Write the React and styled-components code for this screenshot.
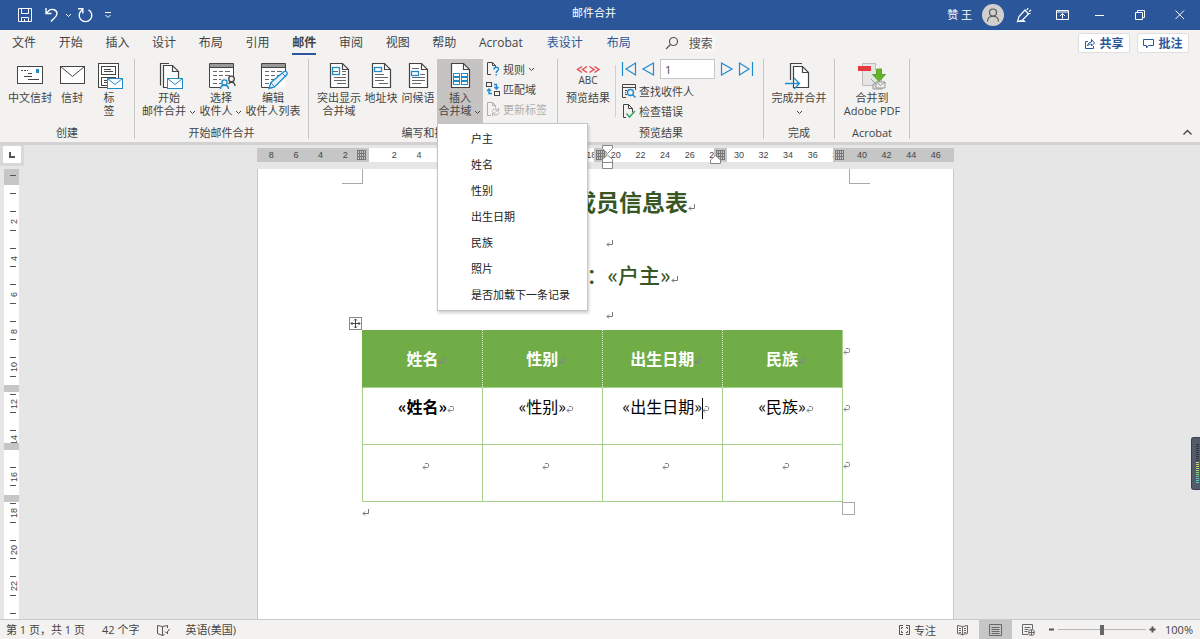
import React, { useState } from 'react'
import styled, { createGlobalStyle } from 'styled-components'

const MERGE_FIELDS = ['户主', '姓名', '性别', '出生日期', '民族', '照片', '是否加载下一条记录']
const MAIN_TABS = ['文件', '开始', '插入', '设计', '布局', '引用', '邮件', '审阅', '视图', '帮助']
const COLUMNS = ['姓名', '性别', '出生日期', '民族']

const RULER_LEFT = [8, 6, 4, 2, '']
const RULER_RIGHT = Array.from({ length: 23 }, (_, i) => (i + 1) * 2)
const RULER_SIDE = Array.from({ length: 11 }, (_, i) => (i + 1) * 2)
const METER = [
  ...Array(9).fill('#2f3540'),
  '#c9cf6a', '#c9cf6a', '#c0cf6a', '#b5cf6a', '#9bd071', '#8fd67a', '#7fd07f', '#62b8a0', '#5cc0b4', '#5cc9c4', '#5cc9c4'
]

const DARK = '#444'
const BLUE = '#1e8bcd'

const Icon = ({ w = 28, h = w, color = DARK, children }) => (
  <Svg width={w} height={h} viewBox={`0 0 ${w} ${h}`} fill="none" stroke={color} aria-hidden="true">
    {children}
  </Svg>
)

const Chevron = ({ color = DARK }) => (
  <Icon w={7} h={5} color={color}><path d="M1 1l2.5 2.5L6 1" /></Icon>
)

const MiniEnvelope = () => (
  <g stroke={BLUE}>
    <rect x="12.5" y="16.5" width="15" height="10" fill="#fff" />
    <path d="M12.5 16.5l7.5 6 7.5-6" />
  </g>
)

const PageShape = () => (
  <>
    <path d="M5.5 1.5h12l6 6v18h-18z" fill="#fff" strokeWidth="1.2" />
    <path d="M17.5 1.5v6h6" strokeWidth="1.2" />
  </>
)

const ListShape = () => (
  <>
    <path d="M2.5 1.5h24v24h-24z" fill="#fff" stroke="none" />
    <path d="M2.5 3.5h24" stroke="#999" strokeWidth="3" />
    <path d="M15 25.5H2.5v-24h24V14M2.5 5.5h24" />
    <path d="M6 9.5h4m2 0h4m2 0h5M6 13.5h4m2 0h4m2 0h5M6 17.5h4m2 0h4M6 21.5h4m2 0h2" stroke="#666" />
  </>
)

const ChineseEnvelopeIcon = () => (
  <Icon>
    <rect x="1.5" y="4.5" width="25" height="17" fill="#fff" />
    <path d="M5 8.5h2m1 0h2m1 0h1M12 11.5h4M8 14.5h8M12 17.5h11" />
    <rect x="20" y="7" width="3" height="4" fill={BLUE} stroke="none" />
  </Icon>
)

const EnvelopeIcon = () => (
  <Icon>
    <rect x="2.5" y="4.5" width="24" height="17" fill="#fff" />
    <path d="M2.5 4.5l12 10 12-10" />
  </Icon>
)

const LabelsIcon = () => (
  <Icon>
    <rect x="3.5" y="1.5" width="20" height="24" fill="#fff" />
    <rect x="6.5" y="4.5" width="14" height="8" />
    <rect x="6.5" y="15.5" width="14" height="8" />
    <path d="M9 7.5h7M9 9.5h9M9 18.5h4M9 20.5h3" />
    <MiniEnvelope />
  </Icon>
)

const StartMergeIcon = () => (
  <Icon>
    <path d="M5.5 23.5v-22H14" strokeWidth="1.2" />
    <path d="M8.5 3.5h9l6 6v16h-15z" fill="#fff" strokeWidth="1.2" />
    <path d="M17.5 3.5v6h6" strokeWidth="1.2" />
    <MiniEnvelope />
  </Icon>
)

const RecipientsIcon = () => (
  <Icon>
    <ListShape />
    <path d="M14 15h14v12H14z" fill="#f3f2f1" stroke="none" />
    <circle cx="24.5" cy="17" r="2.8" strokeWidth="1.3" />
    <path d="M21.5 22c2-3 6.500-2 6.500 2" strokeWidth="1.3" />
    <g stroke={BLUE} strokeWidth="1.4">
      <circle cx="17.5" cy="20.500" r="2.6" />
      <path d="M13.5 27c0-5 8-5 8 0" />
    </g>
  </Icon>
)

const EditListIcon = () => (
  <Icon>
    <ListShape />
    <path d="M10 26.5l2-6L25 9.5c2-1 4 1 3 3L15.5 25z" fill="#e4f1fa" stroke={BLUE} strokeWidth="1.3" />
    <path d="M12 21l3.5 3.5M23 11l3.5 3.5" stroke={BLUE} />
  </Icon>
)

const HighlightIcon = () => (
  <Icon>
    <PageShape />
    <rect x="7.5" y="5.5" width="7" height="7" stroke={BLUE} strokeWidth="1.3" />
    <path d="M8 9.5h5M17 9.5h4M17 12.5h4M9 15.5h12M9 18.5h12M12 21.5h9" stroke="#666" />
  </Icon>
)

const AddressIcon = () => (
  <Icon>
    <PageShape />
    <rect x="7.5" y="5.5" width="7" height="4" stroke={BLUE} strokeWidth="1.3" />
    <path d="M8 12.5h9M8 15.5h13M8 18.5h9M12 21.5h9" stroke="#666" />
  </Icon>
)

const GreetingIcon = () => (
  <Icon>
    <PageShape />
    <path d="M8 6.5h7M16 12.5h5M8 15.5h13M8 18.5h13M8 21.5h9" stroke="#666" />
    <rect x="7.5" y="9.5" width="7" height="4" stroke={BLUE} strokeWidth="1.3" />
  </Icon>
)

const InsertFieldIcon = () => (
  <Icon>
    <PageShape />
    <g stroke={BLUE}>
      <rect x="7.5" y="11.5" width="6" height="3" /><rect x="15.5" y="11.5" width="6" height="3" />
      <rect x="7.5" y="15.5" width="6" height="3" /><rect x="15.5" y="15.5" width="6" height="3" />
      <rect x="7.5" y="19.5" width="6" height="3" /><rect x="15.5" y="19.5" width="6" height="3" />
    </g>
  </Icon>
)

const FinishIcon = () => (
  <Icon>
    <path d="M5.5 18V1.5H17" strokeWidth="1.2" />
    <path d="M8.5 25.5v-21h9l6 6v15z" fill="#fff" strokeWidth="1.2" />
    <path d="M17.5 4.5v6h6" strokeWidth="1.2" />
    <path d="M0 21.5h14M9 16l5.5 5.5L9 27" stroke={BLUE} strokeWidth="1.3" />
  </Icon>
)

const PdfIcon = () => (
  <Icon>
    <path d="M4.5 1.5h13l6 6v16h-19z" fill="#e6e6e6" stroke="#bbb" />
    <path d="M17.5 1.5v6h6" fill="#fff" stroke="#bbb" />
    <path d="M0 4h13v5H0z" fill="#e5383f" stroke="none" />
    <path d="M13 17l7 7M15 22h9v5h-9z" fill="#ddd" stroke="#999" />
    <path d="M18 20h9v6h-9z" fill="#eee" stroke="#999" />
    <path d="M18 20l4.5 3.5L27 20" stroke="#999" />
    <path d="M18.5 7h5v5.5h4L21 19.5l-6.500-7h4z" fill="#66b32e" stroke="#5aa626" />
  </Icon>
)

const PreviewIcon = () => (
  <PreviewGlyph>
    <Icon w={24} h={9} color="#e5484d"><path d="M6 1.500L1.500 4.500 6 7.500M11 1.500L6.500 4.500 11 7.500M13.500 1.500l4.500 3-4.500 3M18.500 1.500l4.500 3-4.500 3" strokeWidth="1.4" /></Icon>
    <span>ABC</span>
  </PreviewGlyph>
)

const RulesIcon = () => (
  <Icon w={14}>
    <path d="M5 12.5H1.5V.5h5l3 3v2M6.5.5v3h3" />
    <path d="M8 7.5c0-3 4.5-3 4.500-.5 0 2-2.300 1.800-2.300 4M10.200 12v1.500" stroke={BLUE} strokeWidth="1.4" />
  </Icon>
)

const MatchIcon = () => (
  <Icon w={14}>
    <rect x=".5" y=".5" width="5" height="4" /><rect x="8.5" y="9.5" width="5" height="4" />
    <path d="M8 2.5h2.500V7M8.500 5l2 2 2-2M6 11.500H3V7M1 9l2-2 2 2" stroke={BLUE} strokeWidth="1.4" />
  </Icon>
)

const UpdateIcon = () => (
  <Icon w={14} color="#b0aeac">
    <path d="M5 13.5H1.5V.5h5l3 3v2M6.5.5v3h3" />
    <path d="M6 9.500c.5-3 5-3.500 6-1M12.500 6v3h-3M13 10.500c-.5 3-5 3.500-6 1M6.500 14v-3h3" />
  </Icon>
)

const FindIcon = () => (
  <Icon w={14}>
    <path d="M4 13.5H.5V.5h13V6M.5 3.5h13" />
    <path d="M3 6.5h2M3 8.5h1M3 10.5h2" />
    <circle cx="8.5" cy="8.5" r="3" stroke={BLUE} strokeWidth="1.4" />
    <path d="M10.5 10.5l3 3" stroke={BLUE} strokeWidth="1.4" />
  </Icon>
)

const CheckErrorsIcon = () => (
  <Icon w={14}>
    <path d="M4 13.5H1.5V.5h5l4 4v4M6.5.5v4h4" />
    <path d="M4.5 9.5l3 3.5L13 7" stroke="#3aa862" strokeWidth="1.5" />
  </Icon>
)

const LineMark = () => (
  <Mark><Icon w={7} h={8} color="#777"><path d="M6.5 1v4.5H1M3 3.5l-2 2 2 2" /></Icon></Mark>
)

const CellMark = () => (
  <Mark><Icon w={7} h={8} color="#81848c"><path d="M3 1.5h2.5q1 0 1 1v2q0 1-1 1H1M3 3.500l-2 2 2 2" /></Icon></Mark>
)

const GridMark = () => (
  <Icon w={9} h={10} color="#777"><path d="M.5 0v10M2.5 0v10M4.5 0v10M6.5 0v10M8.5 0v10M0 .5h9M0 3.5h9M0 6.5h9M0 9.5h9" /></Icon>
)

function TitleBar() {
  return (
    <TitleRow>
      <QuickAccess>
        <TitleButton $w={30} aria-label="保存">
          <Icon w={16} color="#fff"><path d="M1.5 1.5h13v13h-13zM4.5 1.5v5h7v-5M4.5 14.5v-4h7v4M7.5 14v-2" /></Icon>
        </TitleButton>
        <TitleButton $w={24} aria-label="撤消">
          <Icon w={16} color="#fff"><path d="M2 1v5.5h5.5M2 6.5l3-3c3-2.500 8-.5 8 3 0 4-4 5-6 8" strokeWidth="1.4" /></Icon>
        </TitleButton>
        <TitleButton $w={8} aria-label="撤消列表"><Chevron color="#fff" /></TitleButton>
        <TitleButton $w={26} aria-label="重复">
          <Icon w={16} color="#fff"><path d="M5.500 2.800a6.300 6.300 0 1 0 6 0M1 1.700h4.800v4.800" strokeWidth="1.4" /></Icon>
        </TitleButton>
        <TitleButton $w={20} aria-label="自定义快速访问工具栏">
          <Icon w={8} color="#fff"><path d="M1 1.5h6M1.500 4L4 6.500 6.500 4" /></Icon>
        </TitleButton>
      </QuickAccess>
      <DocName>邮件合并</DocName>
      <WindowTools>
        <span>赞 王</span>
        <Avatar aria-label="帐户">
          <Icon w={16} color="#555"><circle cx="8" cy="5.5" r="3.500" strokeWidth="1.2" /><path d="M2.500 14.500c0-7 11-7 11 0" strokeWidth="1.2" /></Icon>
        </Avatar>
        <TitleButton $w={40} aria-label="墨迹">
          <Icon w={16} color="#fff"><path d="M1.500 14.500l1.500-5 6-6.500 3.500 4-6 6zM1.500 14.500h7l-2-2M11 3l1-2M13 4.500l2-1.500M12.500 6.500h2" strokeWidth="1.2" /></Icon>
        </TitleButton>
        <TitleButton $w={36} aria-label="功能区显示选项">
          <Icon w={14} h={12} color="#fff"><path d="M1.5 1.5h12v9h-12zM1.5 3h12M7.5 9.5V5M5 7l2.500-2.500L10 7" /></Icon>
        </TitleButton>
        <TitleButton $w={40} aria-label="最小化"><Icon w={10} color="#fff"><path d="M0 5.5h9" /></Icon></TitleButton>
        <TitleButton $w={40} aria-label="还原"><Icon w={10} color="#fff"><path d="M.5 2.5h7v7h-7zM2.5 2V.5h7v7H8" /></Icon></TitleButton>
        <TitleButton $w={40} aria-label="关闭"><Icon w={10} color="#fff"><path d="M.5.5l8.500 8.500M9 .5L.5 9" /></Icon></TitleButton>
      </WindowTools>
    </TitleRow>
  )
}

function TabBar() {
  const [active, setActive] = useState('邮件')
  return (
    <TabRow>
      <MainTabs>
        {MAIN_TABS.map((tab) => (
          <Tab key={tab} $active={tab === active} onClick={() => setActive(tab)}><span>{tab}</span></Tab>
        ))}
      </MainTabs>
      <MoreTabs>
        <Tab><span>Acrobat</span></Tab>
        <Tab $context><span>表设计</span></Tab>
        <Tab $context><span>布局</span></Tab>
      </MoreTabs>
      <SearchBox>
        <Icon w={14} color="#555"><circle cx="8.5" cy="5.5" r="4" strokeWidth="1.2" /><path d="M5.5 8.5L1 13" strokeWidth="1.2" /></Icon>
        <input type="text" aria-label="搜索" placeholder="搜索" />
      </SearchBox>
      <ShareButton>
        <Icon w={11} color="#2b579a"><path d="M4 3.5H1.5v7h8V8M3.500 8c.5-3 2-4 4-4V1.500L10.500 5l-3 3V6c-2 0-3 .5-4 2z" /></Icon>
        共享
      </ShareButton>
      <ShareButton>
        <Icon w={11} color="#2b579a"><path d="M.5 1.5h10v6h-5L3.500 10V7.500h-3z" /></Icon>
        批注
      </ShareButton>
    </TabRow>
  )
}

function Ribbon() {
  const [open, setOpen] = useState(true)
  return (
    <RibbonRow>
      <Group $w={135} $pad={4}>
        <Tools>
          <BigButton $w={52}><ChineseEnvelopeIcon />中文信封</BigButton>
          <BigButton $w={32}><EnvelopeIcon />信封</BigButton>
          <BigButton $w={42}><LabelsIcon />标<br />签</BigButton>
        </Tools>
        <GroupName>创建</GroupName>
      </Group>
      <Group $w={174} $pad={4}>
        <Tools>
          <BigButton $w={60}><StartMergeIcon />开始<span>邮件合并 <Chevron /></span></BigButton>
          <BigButton $w={44}><RecipientsIcon />选择<span>收件人 <Chevron /></span></BigButton>
          <BigButton $w={60}><EditListIcon />编辑<span>收件人列表</span></BigButton>
        </Tools>
        <GroupName>开始邮件合并</GroupName>
      </Group>
      <Group $w={249} $pad={7}>
        <Tools>
          <BigButton $w={46}><HighlightIcon />突出显示<span>合并域</span></BigButton>
          <BigButton $w={38}><AddressIcon />地址块</BigButton>
          <BigButton $w={36}><GreetingIcon />问候语</BigButton>
          <MenuAnchor>
            <BigButton $w={46} $pressed={open} aria-haspopup="menu" aria-expanded={open} onClick={() => setOpen(!open)}>
              <InsertFieldIcon />插入<span>合并域 <Chevron /></span>
            </BigButton>
            {open && (
              <Menu role="menu">
                {MERGE_FIELDS.map((field) => (
                  <MenuItem key={field} role="menuitem" onClick={() => setOpen(false)}>{field}</MenuItem>
                ))}
              </Menu>
            )}
          </MenuAnchor>
          <SmallTools $pad={3}>
            <SmallButton><RulesIcon />规则 <Chevron /></SmallButton>
            <SmallButton><MatchIcon />匹配域</SmallButton>
            <SmallButton disabled><UpdateIcon />更新标签</SmallButton>
          </SmallTools>
        </Tools>
        <GroupName>编写和插入域</GroupName>
      </Group>
      <Group $w={206} $pad={5}>
        <Tools>
          <BigButton $w={50}><PreviewIcon />预览结果</BigButton>
          <InnerLine />
          <SmallTools $pad={6}>
            <RecordNav>
              <button aria-label="首记录"><Icon w={14} color={BLUE}><path d="M.5 0v14M13.500 1v12L4 7z" strokeWidth="1.2" /></Icon></button>
              <button aria-label="上一记录"><Icon w={14} color={BLUE}><path d="M12.500 1v12L2 7z" strokeWidth="1.2" /></Icon></button>
              <input type="text" aria-label="记录" defaultValue="1" />
              <button aria-label="下一记录"><Icon w={14} color={BLUE}><path d="M1.500 1v12L12 7z" strokeWidth="1.2" /></Icon></button>
              <button aria-label="尾记录"><Icon w={14} color={BLUE}><path d="M13.500 0v14M.5 1v12L10 7z" strokeWidth="1.2" /></Icon></button>
            </RecordNav>
            <SmallButton><FindIcon />查找收件人</SmallButton>
            <SmallButton><CheckErrorsIcon />检查错误</SmallButton>
          </SmallTools>
        </Tools>
        <GroupName>预览结果</GroupName>
      </Group>
      <Group $w={71} $pad={4}>
        <Tools>
          <BigButton $w={62}><FinishIcon />完成并合并<span><Chevron /></span></BigButton>
        </Tools>
        <GroupName>完成</GroupName>
      </Group>
      <Group $w={75} $pad={4}>
        <Tools>
          <BigButton $w={66}><PdfIcon />合并到<span>Adobe PDF</span></BigButton>
        </Tools>
        <GroupName>Acrobat</GroupName>
      </Group>
      <Collapse aria-label="折叠功能区"><Icon w={11} h={7}><path d="M1.5 5.5l4-4 4 4" strokeWidth="1.4" /></Icon></Collapse>
    </RibbonRow>
  )
}

function SideRuler() {
  return (
    <SideColumn>
      <TabStop aria-label="制表符"><Icon w={6} color="#555"><path d="M1 0v5h5" strokeWidth="2" /></Icon></TabStop>
      <SideScale>
        <SideMargin><SideTick /></SideMargin>
        <SideGap><SideTick /></SideGap>
        {RULER_SIDE.map((n) => (
          <SideCell key={n}><SideTick /><span>{n}</span><SideTick /></SideCell>
        ))}
        <SideCell><SideTick /></SideCell>
        <RowBand $top={216} />
        <RowBand $top={274} />
        <RowBand $top={326} />
      </SideScale>
    </SideColumn>
  )
}

function TopRuler() {
  return (
    <TopScale>
      {[...RULER_LEFT, ...RULER_RIGHT].map((n, i) => <span key={i}>{n}</span>)}
      <ColumnMark $left={98}><GridMark /></ColumnMark>
      <ColumnMark $left={337}><GridMark /></ColumnMark>
      <ColumnMark $left={457}><GridMark /></ColumnMark>
      <ColumnMark $left={576}><GridMark /></ColumnMark>
      <Indent $left={345} $top={-3}>
        <Icon w={11} h={25} color="#888">
          <path d="M.5.5h10v3l-5 5-5-5zM5.5 10l5 4.500v3H.5v-3zM.5 17.5h10v6H.5z" fill="#fff" />
        </Icon>
      </Indent>
      <Indent $left={453} $top={7}>
        <Icon w={11} h={9} color="#888"><path d="M5.5.5l5 4.500v3.500H.5V5z" fill="#fff" /></Icon>
      </Indent>
    </TopScale>
  )
}

function DocumentPage() {
  return (
    <Sheet>
      <Corners><Corner $side="right" /><Corner $side="left" /></Corners>
      <Heading>家庭成员信息表<LineMark /></Heading>
      <Blank><LineMark /></Blank>
      <SubHeading>户主：«户主»<LineMark /></SubHeading>
      <Blank><LineMark /></Blank>
      <TableBox>
        <MoveHandle>
          <Icon w={13}><rect x=".5" y=".5" width="12" height="12" fill="#fff" stroke="#888" /><path d="M6.5 2v9M2 6.5h9M5 3.5L6.5 2 8 3.5M5 9.5L6.5 11 8 9.5M3.5 5L2 6.5 3.5 8M9.5 5L11 6.5 9.5 8" /></Icon>
        </MoveHandle>
        <DataTable>
          <thead>
            <tr>
              {COLUMNS.map((name) => <th key={name} scope="col">{name}<CellMark /></th>)}
              <RowEnd><CellMark /></RowEnd>
            </tr>
          </thead>
          <tbody>
            <tr>
              {COLUMNS.map((name) => (
                <td key={name}>«{name}»{name === '出生日期' && <Caret />}<CellMark /></td>
              ))}
              <RowEnd><CellMark /></RowEnd>
            </tr>
            <tr>
              {COLUMNS.map((name) => <td key={name}><CellMark /></td>)}
              <RowEnd><CellMark /></RowEnd>
            </tr>
          </tbody>
        </DataTable>
        <SizeHandle />
      </TableBox>
      <LastLine><LineMark /></LastLine>
    </Sheet>
  )
}

function StatusBar() {
  const [zoom, setZoom] = useState(100)
  return (
    <StatusRow>
      <StatusText>第 1 页，共 1 页</StatusText>
      <StatusText>42 个字</StatusText>
      <Icon w={14} h={12} color="#555"><path d="M6.500 2.500v9M6.500 2.500l-5-1v8l5 2 2-1M6.500 2.500l5-1V4M9 7.500l1.500 1.500 3-4M11.500 8v2" /></Icon>
      <StatusText>英语(美国)</StatusText>
      <Filler />
      <FocusButton>
        <Icon w={13} h={12} color="#555"><path d="M5 1.5H1.500v9H5M8 1.500h3.500v9H8M3.500 5V3.500H5M9.500 5V3.500H8M3.500 7v1.500H5M9.500 7v1.500H8" /></Icon>
        专注
      </FocusButton>
      <ViewButton aria-label="阅读视图">
        <Icon w={13} h={12} color="#666"><path d="M6.500 2.500v9M6.500 2.500l-5-1v8l5 1 5-1v-8zM3 4.500h2M3 6.500h2M3 8.500h2M8 4.500h2M8 6.500h2M8 8.500h2" /></Icon>
      </ViewButton>
      <ViewButton $active aria-label="页面视图">
        <Icon w={13} h={12} color="#666"><path d="M.5.5h12v11H.5zM2.500 3.500h8M2.500 5.500h8M2.500 7.500h8M2.500 9.500h8" /></Icon>
      </ViewButton>
      <ViewButton aria-label="Web 版式视图">
        <Icon w={13} h={12} color="#666"><path d="M6 10.500H.5V.5h10V5M2.500 3.500h6M2.500 5.500h4M2.500 7.500h3" /><circle cx="9.500" cy="8.500" r="3" /><path d="M7 8.500h5M9.500 6v5" /></Icon>
      </ViewButton>
      <ZoomButton aria-label="缩小" onClick={() => setZoom(Math.max(10, zoom - 10))}>
        <Icon w={7} color="#555"><path d="M1 3.500h5" strokeWidth="2" /></Icon>
      </ZoomButton>
      <ZoomSlider type="range" aria-label="显示比例" min="10" max="190" value={zoom} onChange={(e) => setZoom(Number(e.target.value))} />
      <ZoomButton aria-label="放大" onClick={() => setZoom(Math.min(190, zoom + 10))}>
        <Icon w={7} color="#555"><path d="M.5 3.500h6M3.500.5v6" strokeWidth="2" /></Icon>
      </ZoomButton>
      <ZoomText>{zoom}%</ZoomText>
    </StatusRow>
  )
}

function App() {
  return (
    <>
      <GlobalStyle />
      <Shell>
        <TitleBar />
        <TabBar />
        <Ribbon />
        <Workspace>
          <SideRuler />
          <Canvas>
            <TopRuler />
            <DocumentPage />
          </Canvas>
          <Meter>{METER.map((color, k) => <MeterBar key={k} $color={color} />)}</Meter>
        </Workspace>
        <StatusBar />
      </Shell>
    </>
  )
}

export default App


const GlobalStyle = createGlobalStyle`
  * { box-sizing: border-box; }
  body { margin: 0; }
  body, button, input {
    font-family: "Open Sans", "Noto Sans CJK SC", sans-serif;
    font-size: 11px;
    color: #444;
  }
  button { background: none; border: 0; padding: 0; }
`

const Shell = styled.div`
  height: 100vh;
  display: flex;
  flex-direction: column;
  overflow: hidden;
  background: #f3f2f1;`

const Svg = styled.svg`
  flex: none;
  overflow: visible;`

const TitleRow = styled.header`
  flex: none;
  height: 30px;
  display: grid;
  grid-template-columns: 1fr auto 1fr;
  align-items: center;
  background: #2b579a;
  color: #fff;
  font-size: 11px;`

const QuickAccess = styled.div`
  display: flex;
  align-items: center;
  padding-left: 10px;`

const DocName = styled.div`
  margin-right: 12px;
  line-height: 26px;
  align-self: start;`

const WindowTools = styled.div`
  display: flex;
  align-items: center;
  justify-content: flex-end;
  line-height: 28px;`

const TitleButton = styled.button`
  width: ${(props) => props.$w}px;
  height: 30px;
  display: flex;
  align-items: center;
  justify-content: center;`

const Avatar = styled.button`
  width: 22px;
  height: 22px;
  margin-left: 10px;
  border-radius: 50%;
  background: #d2d0ce;
  display: flex;
  align-items: center;
  justify-content: center;`

const TabRow = styled.nav`
  flex: none;
  height: 26px;
  display: flex;
  align-items: center;
  padding: 0 11px 0 12px;`

const MainTabs = styled.div`
  width: 467px;
  display: flex;`

const MoreTabs = styled.div`
  display: flex;
  gap: 24px;`

const Tab = styled.button`
  flex: 1 0 auto;
  text-align: left;
  font-size: 12px;
  color: ${(props) => (props.$context ? '#2b579a' : '#444')};
  font-weight: ${(props) => (props.$active ? 700 : 400)};
  white-space: nowrap;
  span {
    display: inline-block;
    padding-top: 2px;
    line-height: 20px;
    border-bottom: 2px solid ${(props) => (props.$active ? '#2b579a' : 'transparent')};
  }`

const SearchBox = styled.label`
  flex: 1;
  display: flex;
  align-items: center;
  gap: 10px;
  padding-left: 34px;
  input {
    width: 26px;
    height: 16px;
    padding: 0;
    border: 0;
    background: #f9f8f7;
    font-size: 12px;
  }
  input::placeholder { color: #555; }`

const ShareButton = styled.button`
  width: 52px;
  height: 20px;
  margin-left: 7px;
  display: flex;
  align-items: center;
  justify-content: center;
  gap: 4px;
  background: #fff;
  border: 1px solid #e1dfdd;
  border-radius: 2px;
  color: #2b579a;
  font-size: 12px;
  font-weight: 700;`

const RibbonRow = styled.section`
  flex: none;
  height: 86px;
  padding: 3px 0;
  display: flex;`

const Group = styled.div`
  flex: none;
  width: ${(props) => props.$w}px;
  padding-left: ${(props) => props.$pad}px;
  padding-right: 4px;
  border-right: 1px solid #c8c6c4;
  display: flex;
  flex-direction: column;`

const Tools = styled.div`
  height: 64px;
  display: flex;`

const GroupName = styled.div`
  line-height: 20px;
  text-align: center;`

const BigButton = styled.button`
  flex: none;
  width: ${(props) => props.$w}px;
  height: 64px;
  padding-top: 3px;
  display: flex;
  flex-direction: column;
  align-items: center;
  background: ${(props) => (props.$pressed ? '#c6c4c2' : 'transparent')};
  line-height: 13px;
  white-space: nowrap;
  > svg { margin-bottom: 1px; }
  span svg { vertical-align: middle; }`

const PreviewGlyph = styled.div`
  height: 29px;
  padding-top: 3px;
  display: flex;
  flex-direction: column;
  align-items: center;
  font-size: 10px;
  line-height: 12px;`

const SmallTools = styled.div`
  padding-left: ${(props) => props.$pad}px;
  display: flex;
  flex-direction: column;`

const SmallButton = styled.button`
  height: 20px;
  display: flex;
  align-items: center;
  gap: 3px;
  white-space: nowrap;
  color: ${(props) => (props.disabled ? '#b0aeac' : '#444')};`

const InnerLine = styled.div`
  width: 1px;
  height: 52px;
  margin: 6px 0 0 2px;
  background: #d2d0ce;`

const RecordNav = styled.div`
  display: flex;
  align-items: center;
  height: 22px;
  padding-bottom: 2px;
  gap: 5px;
  button { display: flex; }
  input {
    width: 55px;
    height: 20px;
    padding: 0 4px;
    border: 1px solid #c8c6c4;
    background: #fff;
  }`

const Collapse = styled.button`
  margin-left: auto;
  align-self: flex-end;
  padding-right: 7px;`

const MenuAnchor = styled.div`
  position: relative;
  margin-left: 1px;`

const Menu = styled.div`
  position: absolute;
  z-index: 5;
  top: 64px;
  left: 0;
  width: 151px;
  padding: 1px 0 3px;
  display: flex;
  flex-direction: column;
  background: #fff;
  border: 1px solid #c6c6c6;
  box-shadow: 1px 2px 3px #0003;`

const MenuItem = styled.button`
  height: 26px;
  padding-left: 33px;
  text-align: left;
  color: #222;
  white-space: nowrap;`

const Workspace = styled.main`
  position: relative;
  flex: 1;
  min-height: 0;
  display: flex;
  background: #e6e6e6;
  border-top: 3px solid #d2d2d2;
  overflow: hidden;`

const SideColumn = styled.div`
  flex: none;
  width: 24px;
  display: flex;
  flex-direction: column;`

const TabStop = styled.button`
  flex: none;
  width: 24px;
  height: 21px;
  border: 3px solid #d8d8d8;
  border-top-width: 1px;
  background: #fff;
  display: flex;
  align-items: center;
  justify-content: center;`

const SideScale = styled.div`
  position: relative;
  flex: 1;
  min-height: 0;
  width: 15px;
  margin: 3px 0 0 4px;
  overflow: hidden;
  background: #fff;`

const SideMargin = styled.div`
  height: 16px;
  padding: 6px 0 0 6px;
  background: #c6c6c6;`

const SideGap = styled.div`
  height: 17px;
  padding: 8px 0 0 6px;`

const SideTick = styled.i`
  display: block;
  width: 6px;
  height: 1px;
  background: #555;`

const SideCell = styled.div`
  height: 36px;
  padding: 9px 0 8px 6px;
  display: flex;
  flex-direction: column;
  justify-content: space-between;
  &:nth-child(odd) { height: 37px; }
  span {
    height: 12px;
    width: 8px;
    display: flex;
    align-items: center;
    justify-content: center;
    writing-mode: vertical-rl;
    transform: rotate(180deg);
    font-family: "Liberation Sans", sans-serif;
    font-size: 9px;
    line-height: 8px;
  }`

const RowBand = styled.div`
  position: absolute;
  left: 0;
  top: ${(props) => props.$top}px;
  width: 15px;
  height: 7px;
  background: #c6c6c6;`

const Canvas = styled.div`
  flex: 1;
  min-width: 0;
  padding: 3px 13px 0 0;
  display: flex;
  flex-direction: column;
  align-items: center;`

const TopScale = styled.div`
  position: relative;
  flex: none;
  width: 697px;
  height: 14px;
  padding: 0 6px 0 2px;
  display: flex;
  background: linear-gradient(to right, #c6c6c6 112px, #fff 112px, #fff 580px, #c6c6c6 580px);
  span {
    flex: 1;
    text-align: center;
    font-family: "Liberation Sans", sans-serif;
    font-size: 9px;
    line-height: 14px;
  }`

const ColumnMark = styled.div`
  position: absolute;
  left: ${(props) => props.$left}px;
  top: 0;
  height: 14px;
  padding: 2px;
  background: #c6c6c6;
  display: flex;`

const Indent = styled.div`
  position: absolute;
  left: ${(props) => props.$left}px;
  top: ${(props) => props.$top}px;
  display: flex;`

const Sheet = styled.article`
  flex: 1;
  width: 697px;
  margin-top: 7px;
  border: solid #c8c8c8;
  border-width: 0 1px;
  background: #fff;
  color: #000;
  font-family: "Noto Sans CJK SC", sans-serif;`

const Corners = styled.div`
  display: flex;
  justify-content: space-between;
  padding: 0 83px 0 84px;`

const Corner = styled.div`
  width: 21px;
  height: 15px;
  border-bottom: 1px solid #aaa;
  border-${(props) => props.$side}: 1px solid #aaa;`

const Heading = styled.h1`
  margin: 0;
  padding-left: 4px;
  font-size: 23px;
  line-height: 34px;
  text-align: center;
  color: #385623;`

const SubHeading = styled.h2`
  margin: 0;
  padding-left: 4px;
  font-size: 21px;
  font-weight: 500;
  line-height: 32px;
  text-align: center;
  color: #385623;`

const Blank = styled.p`
  margin: 0;
  height: 40px;
  font-size: 16px;
  line-height: 44px;
  text-align: center;`

const Mark = styled.span`
  display: inline-block;
  width: 0;
  line-height: 8px;
  text-align: left;
  white-space: nowrap;`

const TableBox = styled.div`
  position: relative;
  width: 488px;
  margin-left: 104px;`

const DataTable = styled.table`
  width: 488px;
  table-layout: fixed;
  border-collapse: collapse;
  font-size: 16px;
  line-height: 24px;
  th, td {
    height: 57px;
    padding: 0;
    text-align: center;
    white-space: nowrap;
  }
  th {
    background: #70ad47;
    border-left: 1px dotted #e4f0dc;
    color: #fff;
    font-weight: 700;
  }
  th:first-child { border-left: 1px solid #70ad47; }
  td {
    padding-top: 6px;
    vertical-align: top;
    border: 1px solid #a8d08d;
  }
  td:first-child { font-weight: 700; }`

const RowEnd = styled.td`
  && {
    width: 8px;
    padding-top: 6px;
    vertical-align: top;
    border-width: 0 0 0 1px;
    text-align: left;
  }`

const Caret = styled.i`
  display: inline-block;
  width: 1px;
  height: 21px;
  margin-right: -1px;
  vertical-align: middle;
  background: #000;`

const MoveHandle = styled.div`
  position: absolute;
  left: -13px;
  top: -13px;
  display: flex;`

const SizeHandle = styled.div`
  position: absolute;
  right: -5px;
  bottom: -13px;
  width: 13px;
  height: 13px;
  border: 1px solid #aaa;
  background: #fff;`

const LastLine = styled.p`
  margin: 0 0 0 104px;
  font-size: 11px;
  line-height: 18px;`

const Meter = styled.aside`
  position: absolute;
  right: 0;
  top: 292px;
  width: 9px;
  height: 53px;
  padding: 6px 2px 0 4px;
  display: flex;
  flex-direction: column;
  gap: 1px;
  border-radius: 3px 0 0 3px;
  border: 1px solid #3a404d;
  border-right: 0;
  background: #545b6b;`

const MeterBar = styled.i`
  flex: none;
  width: 3px;
  height: 1px;
  background: ${(props) => props.$color};`

const StatusRow = styled.footer`
  flex: none;
  height: 20px;
  display: flex;
  align-items: center;
  padding: 0 7px 0 6px;
  border-top: 1px solid #c8c8c8;
  background: #f3f2f1;
  line-height: 16px;
  > svg { margin-right: 15px; }`

const StatusText = styled.span`
  margin-right: 17px;
  white-space: nowrap;`

const Filler = styled.div`
  flex: 1;`

const FocusButton = styled.button`
  display: flex;
  align-items: center;
  gap: 3px;
  margin-right: 10px;`

const ViewButton = styled.button`
  width: 33px;
  height: 19px;
  display: flex;
  align-items: center;
  justify-content: center;
  background: ${(props) => (props.$active ? '#c6c6c6' : 'transparent')};`

const ZoomButton = styled.button`
  width: 13px;
  height: 19px;
  display: flex;
  align-items: center;
  justify-content: center;`

const ZoomSlider = styled.input`
  appearance: none;
  width: 88px;
  height: 11px;
  margin: 0;
  background: linear-gradient(#b5b5b5, #b5b5b5) center / 100% 1px no-repeat;
  &::-webkit-slider-thumb {
    appearance: none;
    width: 4px;
    height: 10px;
    background: #666;
  }`

const ZoomText = styled.span`
  width: 34px;
  text-align: right;`
